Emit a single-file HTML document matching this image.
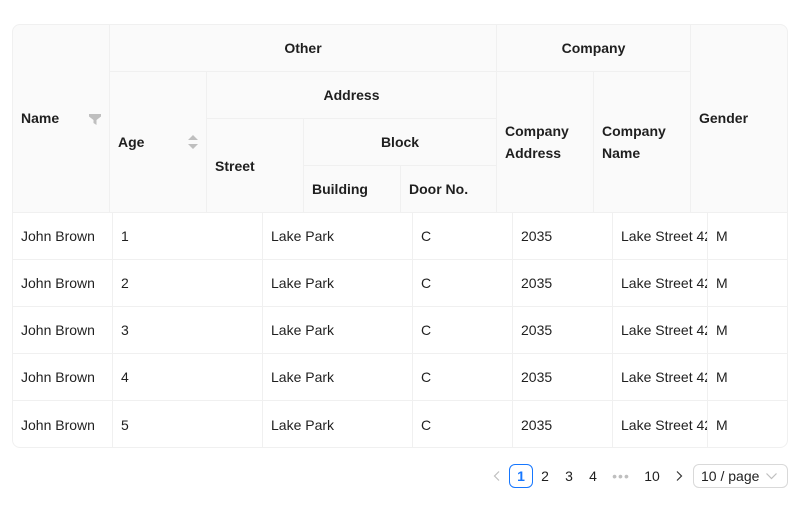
<!DOCTYPE html><html><head><style>
body{margin:0;background:#fff;font-family:"Liberation Sans",sans-serif;font-size:14px;color:rgba(0,0,0,.88)}
.c{position:absolute;box-sizing:border-box;border-right:1px solid #f0f0f0;border-bottom:1px solid #f0f0f0;display:flex;align-items:center;padding:0 8px;line-height:22px}
.h{background:#fafafa;font-weight:bold}
.ctr{justify-content:center}
.wrap{position:absolute;left:12px;top:24px;width:776px;height:424px;border-radius:8px;overflow:hidden}
.bd{position:absolute;left:12px;top:24px;width:776px;height:424px;border:1px solid #f0f0f0;border-radius:8px;box-sizing:border-box}
.pg{position:absolute;top:464px;height:24px;line-height:24px;text-align:center;font-size:14px}
</style></head><body>
<div class="wrap">
<div style="position:absolute;left:-11px;top:-23px;width:800px;height:528px">
<div class="c h" style="left:11px;top:23px;width:98px;height:189px;padding-left:9px">Name<svg style="position:absolute;left:77px;top:90px" width="12" height="11" viewBox="0 0 12 11"><path d="M0 0H12V2.5L7.5 6V11L4.5 9V6L0 2.5Z" fill="#bfbfbf"/></svg></div>
<div class="c h ctr" style="left:109px;top:23px;width:387px;height:48px">Other</div>
<div class="c h ctr" style="left:496px;top:23px;width:194px;height:48px">Company</div>
<div class="c h" style="left:690px;top:23px;width:98px;height:189px;border-right:none">Gender</div>
<div class="c h" style="left:109px;top:71px;width:97px;height:141px">Age<svg style="position:absolute;left:78px;top:63px" width="10" height="14" viewBox="0 0 10 14"><path d="M5 0L10 5H0Z M5 14L0 9H10Z" fill="#bfbfbf"/></svg></div>
<div class="c h ctr" style="left:206px;top:71px;width:290px;height:47px">Address</div>
<div class="c h" style="left:496px;top:71px;width:97px;height:141px">Company<br>Address</div>
<div class="c h" style="left:593px;top:71px;width:97px;height:141px">Company<br>Name</div>
<div class="c h" style="left:206px;top:118px;width:97px;height:94px">Street</div>
<div class="c h ctr" style="left:303px;top:118px;width:193px;height:47px">Block</div>
<div class="c h" style="left:303px;top:165px;width:97px;height:47px">Building</div>
<div class="c h" style="left:400px;top:165px;width:96px;height:47px">Door No.</div>
<div id="body"></div>
</div></div>
<div class="bd"></div>
<svg style="position:absolute;left:493px;top:471px" width="8" height="10" viewBox="0 0 8 10"><path d="M6 0.5L1.5 5L6 9.5" fill="none" stroke="#bfbfbf" stroke-width="1.2"/></svg>
<div class="pg" style="left:509px;width:24px;height:24px;border:1px solid #1677ff;border-radius:6px;box-sizing:border-box;line-height:22px;color:#1677ff;font-weight:bold">1</div>
<div class="pg" style="left:535px;width:20px">2</div>
<div class="pg" style="left:559px;width:20px">3</div>
<div class="pg" style="left:583px;width:20px">4</div>
<div class="pg" style="left:609px;width:24px;color:#bfbfbf;letter-spacing:1px">•••</div>
<div class="pg" style="left:639px;width:26px">10</div>
<svg style="position:absolute;left:675px;top:471px" width="8" height="10" viewBox="0 0 8 10"><path d="M2 0.5L6.5 5L2 9.5" fill="none" stroke="#333" stroke-width="1.2"/></svg>
<div class="pg" style="left:693px;width:95px;border:1px solid #d9d9d9;border-radius:6px;box-sizing:border-box;height:24px;line-height:22px;text-align:left;padding-left:7px">10 / page<svg style="position:absolute;left:72px;top:8px" width="11" height="7" viewBox="0 0 11 7"><path d="M0.5 0.5L5.5 5.5L10.5 0.5" fill="none" stroke="#bfbfbf" stroke-width="1.2"/></svg></div>
<script>
var xs=[11,112,262,412,512,612,707,788],b='';
for(var r=0;r<5;r++){var v=['John Brown',r+1,'Lake Park','C','2035','Lake Street 42','M'];
for(var i=0;i<7;i++){b+='<div class="c" style="left:'+xs[i]+'px;top:'+(212+r*47)+'px;width:'+(xs[i+1]-xs[i])+'px;height:47px;overflow:hidden;white-space:nowrap;'+(i==0?'padding-left:9px;':'')+(i==6?'border-right:none;':'')+(r==4?'border-bottom:none;':'')+'">'+v[i]+'</div>';}}
document.getElementById('body').innerHTML=b;
</script>
</body></html>
